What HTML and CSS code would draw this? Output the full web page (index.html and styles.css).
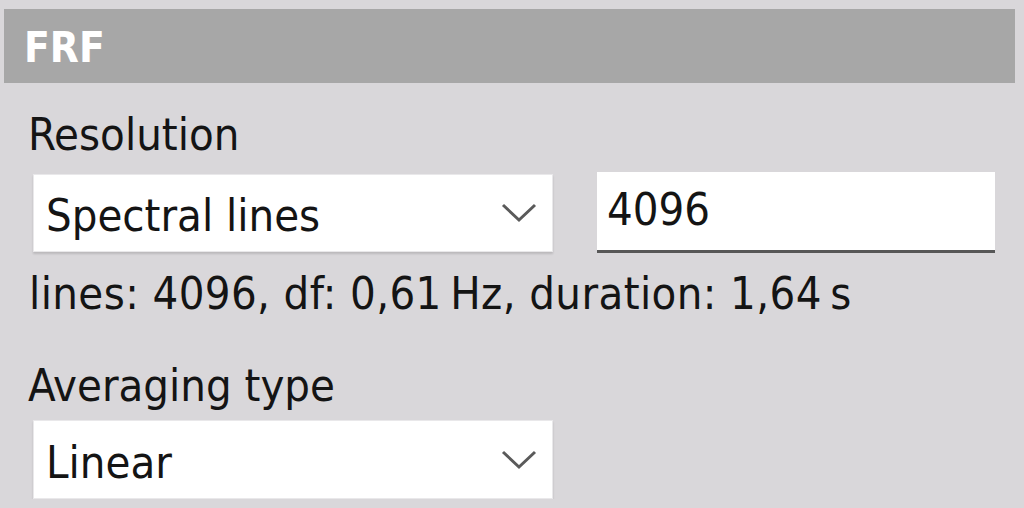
FILE: index.html
```html
<!DOCTYPE html>
<html>
<head>
    <link rel="stylesheet" href="styles.css">
</head>
<body>
    <div class="panel">
        <!-- Section header -->
        <div class="panel-header">FRF</div>

        <div class="panel-body">
            <div class="field-label">Resolution</div>
            <div class="field-row">
                <div class="combo">
                    <span class="combo-text">Spectral lines</span>
                    <svg class="chevron" width="36" height="20" viewBox="0 0 36 20">
                        <polyline points="2,2 18,17 34,2" fill="none" stroke="#5a5a5a" stroke-width="3"/>
                    </svg>
                </div>
                <div class="text-input">4096</div>
            </div>
            <div class="info-text">lines: 4096, df: 0,61&#8201;Hz, duration: 1,64&#8201;s</div>

            <div class="field-label field-label-gap">Averaging type</div>
            <div class="combo combo-second">
                <span class="combo-text">Linear</span>
                <svg class="chevron" width="36" height="20" viewBox="0 0 36 20">
                    <polyline points="2,2 18,17 34,2" fill="none" stroke="#5a5a5a" stroke-width="3"/>
                </svg>
            </div>
        </div>
    </div>
</body>
</html>
```

FILE: styles.css
```css
body {
    margin: 0;
    background-color: #d9d7da; /* window background */
    font-family: "DejaVu Sans Condensed", "DejaVu Sans", sans-serif;
    font-stretch: condensed;
    color: #141414;
    overflow: hidden;
}

.panel {
    padding: 9px 9px 0 4px;
}

.panel-header {
    box-sizing: border-box;
    height: 74px;
    padding: 4px 0 0 20px;
    line-height: 70px;
    background-color: #a7a7a7;
    color: #fff;
    font-size: 42px;
    font-weight: bold;
}

.panel-body {
    padding-left: 24px;
}

.field-label {
    margin-top: 28px;
    font-size: 45px;
    line-height: 48px;
}

.field-label-gap {
    margin-top: 44px;
}

.field-row {
    display: flex;
    align-items: center;
    gap: 44px;
    margin-top: 13px;
    padding-left: 5px;
}

.combo {
    box-sizing: border-box;
    display: flex;
    align-items: center;
    justify-content: space-between;
    width: 520px;
    height: 78px;
    padding: 6px 15px 0 12px;
    background-color: #fff;
    border: 1px solid #e9e8ea;
    box-shadow: 0 2px 2px rgba(0, 0, 0, 0.14);
}

.combo-second {
    height: 79px;
    margin: 10px 0 0 5px;
}

.combo-text {
    font-size: 45px;
    line-height: 72px;
}

.chevron {
    margin-top: -6px;
}

.text-input {
    box-sizing: border-box;
    width: 398px;
    height: 81px;
    padding: 0 0 2px 10px;
    background-color: #fff;
    border-bottom: 3px solid #575757;
    font-size: 45px;
    line-height: 76px;
}

.info-text {
    margin-top: 17px;
    padding-left: 1px;
    font-size: 45px;
    line-height: 48px;
    letter-spacing: 0.4px;
}
```
